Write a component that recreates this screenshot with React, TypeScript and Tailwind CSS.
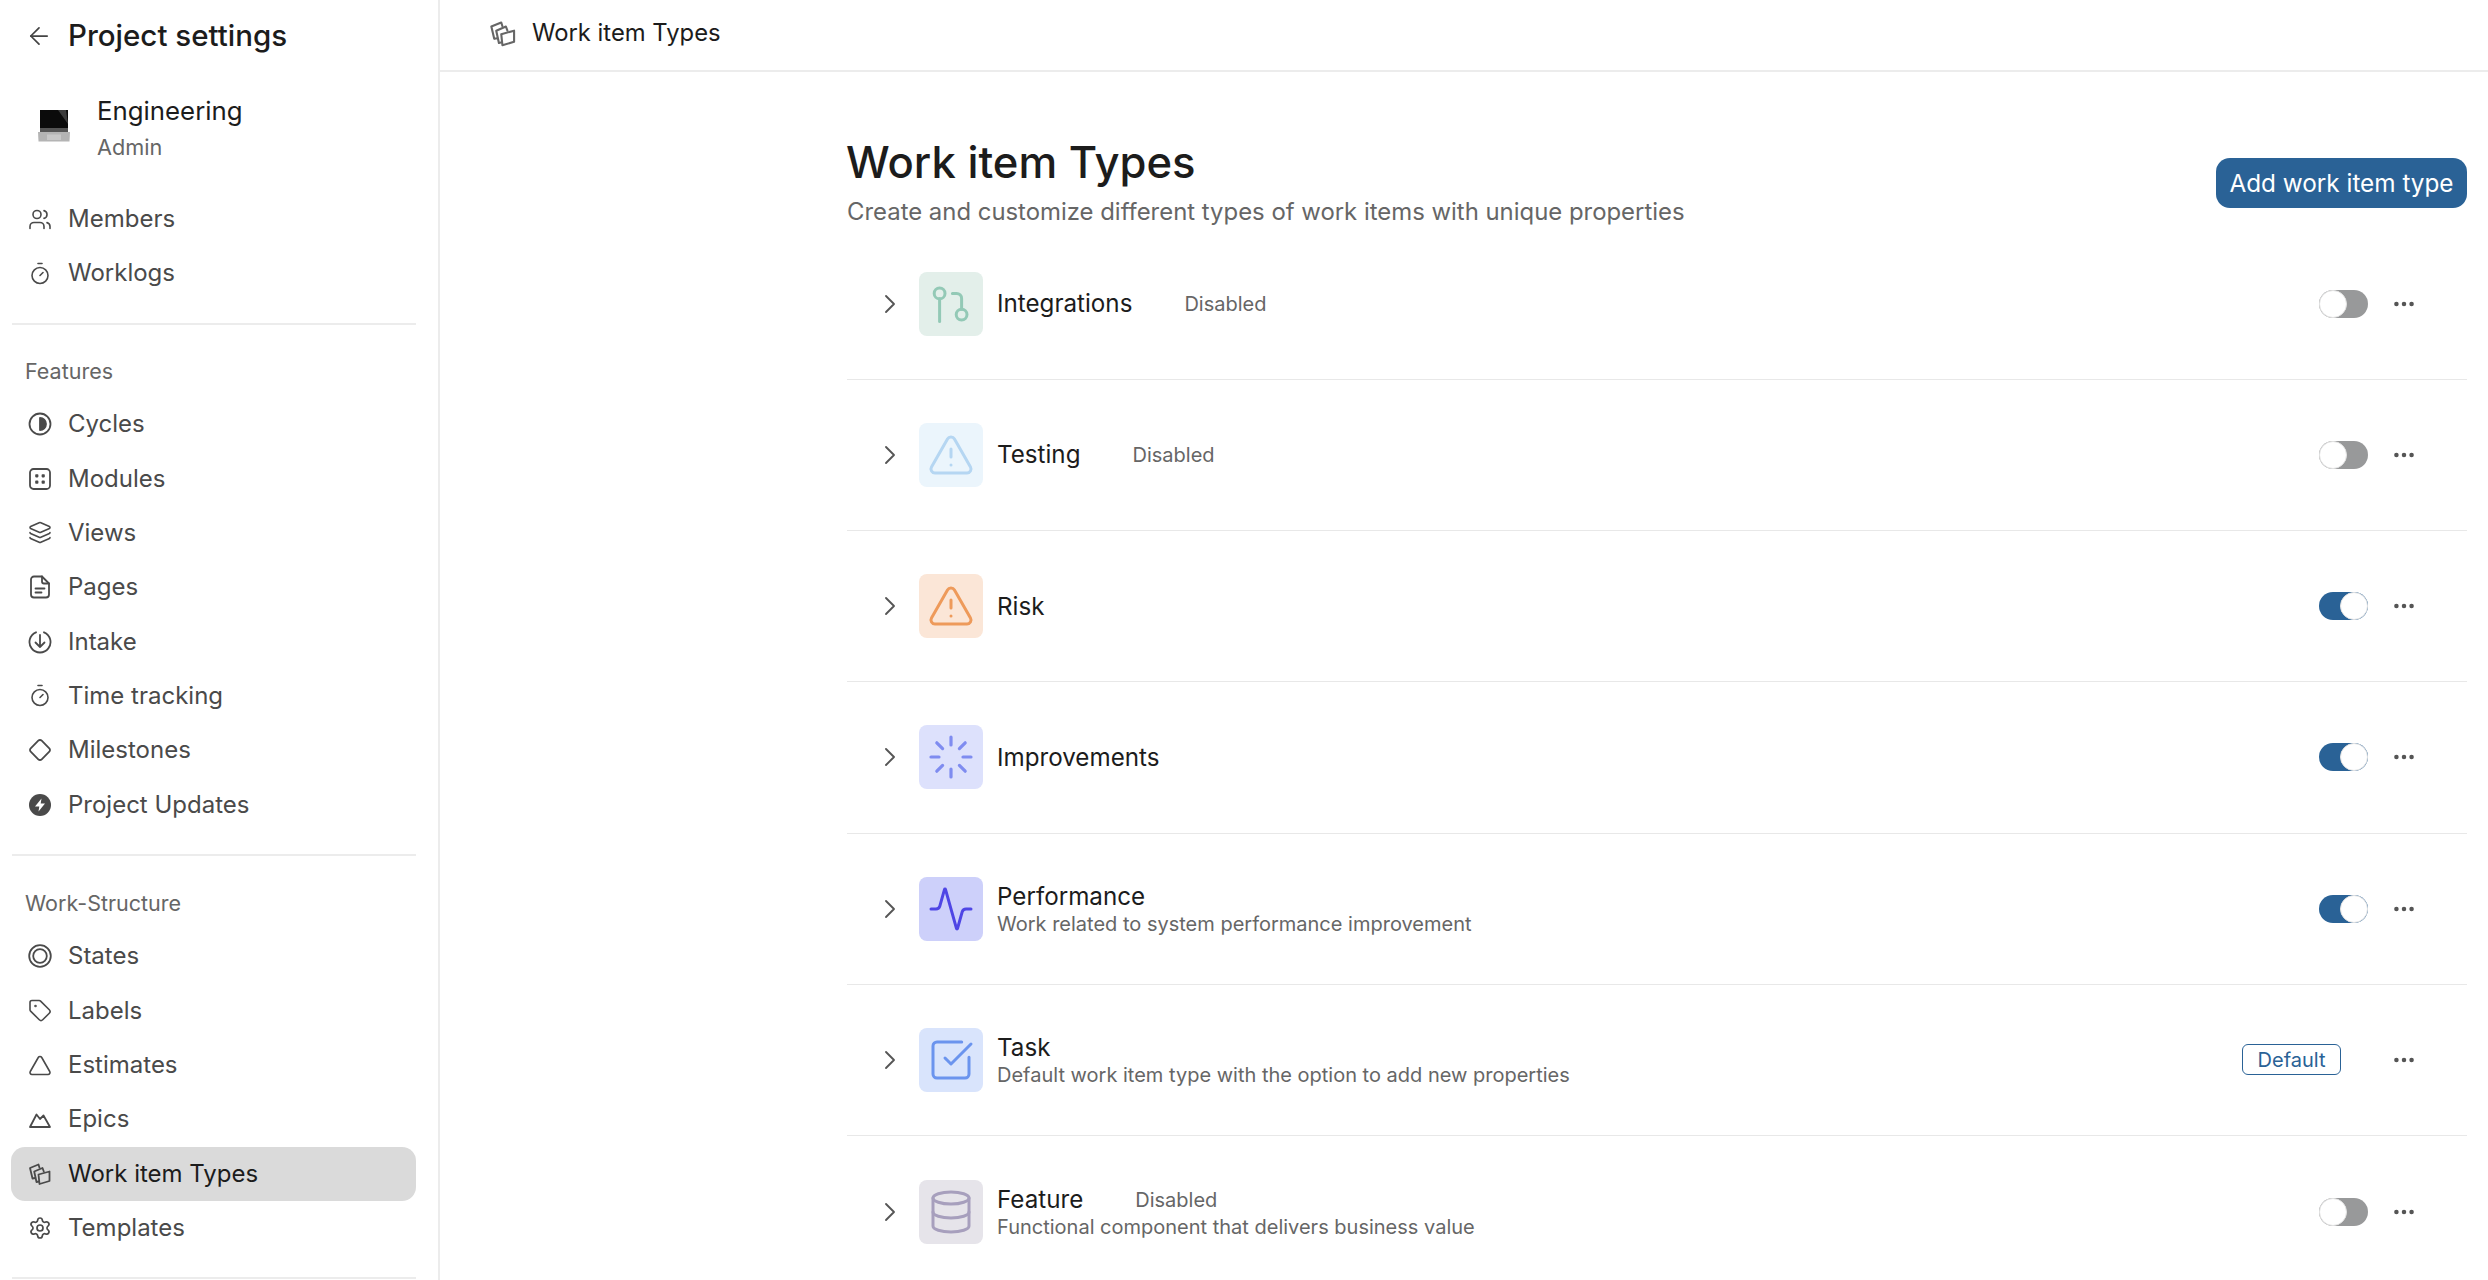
import { ReactNode } from 'react';
import {
  Activity,
  ArrowLeft,
  ChevronRight,
  Database,
  Diamond,
  Ellipsis,
  Layers,
  Loader,
  Settings,
  SquareCheckBig,
  Tag,
  Timer,
  Triangle,
  TriangleAlert,
  Users,
} from 'lucide-react';

const svgProps = {
  viewBox: '0 0 24 24',
  fill: 'none',
  stroke: 'currentColor',
  strokeWidth: 1.8,
  strokeLinecap: 'round' as const,
  strokeLinejoin: 'round' as const,
};

const CyclesIcon = () => (
  <svg {...svgProps} className="size-6">
    <circle cx="12" cy="12" r="10.5" />
    <path d="M12 6a6 6 0 0 1 0 12z" fill="currentColor" />
  </svg>
);

const ModulesIcon = () => (
  <svg {...svgProps} className="size-6">
    <rect x="2" y="2" width="20" height="20" rx="3.5" />
    <g fill="currentColor" stroke="none">
      <rect x="7.2" y="7.2" width="3.2" height="3.2" rx="0.8" />
      <rect x="13.6" y="7.2" width="3.2" height="3.2" rx="0.8" />
      <rect x="7.2" y="13.6" width="3.2" height="3.2" rx="0.8" />
      <rect x="13.6" y="13.6" width="3.2" height="3.2" rx="0.8" />
    </g>
  </svg>
);

const PagesIcon = () => (
  <svg {...svgProps} className="size-6">
    <path d="M14 1.500H6a3 3 0 0 0-3 3v15a3 3 0 0 0 3 3h12a3 3 0 0 0 3-3V8.500z" />
    <path d="M14 1.500v5a2 2 0 0 0 2 2h5" />
    <path d="M7.500 13.500h9M7.500 17.500h6" />
  </svg>
);

const IntakeIcon = () => (
  <svg {...svgProps} className="size-6">
    <path d="M8 2.300a10.500 10.500 0 1 0 8 0" />
    <path d="M12 5v12M7.500 12.500 12 17l4.500-4.500" />
  </svg>
);

const UpdatesIcon = () => (
  <svg viewBox="0 0 24 24" className="size-6">
    <circle cx="12" cy="12" r="11" fill="currentColor" />
    <path d="M13.500 5.500 7 13.500h4.300L10.500 18.500 17 10.500h-4.300z" fill="#fff" />
  </svg>
);

const StatesIcon = () => (
  <svg {...svgProps} className="size-6">
    <circle cx="12" cy="12" r="10.800" />
    <circle cx="12" cy="12" r="6.800" strokeWidth={1.8} />
  </svg>
);

const EpicsIcon = () => (
  <svg {...svgProps} className="size-[26px]">
    <path d="M2 20 8.500 7.500 12 12l3.500-3.500L22 20z" />
  </svg>
);

const TypesIcon = ({ className = 'size-[27px]' }: { className?: string }) => (
  <svg {...svgProps} className={className}>
    <path d="M7.300 16.500 4.500 17 2 6.500 10.500 3l1 3.200" />
    <path d="M11 20 8.500 20.500 6.200 10 14.500 6.500l1.300 3.500" />
    <path d="M10.500 13 21.500 10v9.500L11.500 22.500z" />
  </svg>
);

const BranchIcon = () => (
  <svg viewBox="0 0 24 24" fill="none" stroke="#93c9b6" strokeWidth={1.5} strokeLinecap="round" className="size-[48px]">
    <circle cx="6.300" cy="6.700" r="2.700" />
    <path d="M6.300 9.400v11.400" />
    <circle cx="17.300" cy="17.300" r="2.700" />
    <path d="M12.700 6.700h2.100a2.500 2.500 0 0 1 2.500 2.500v5.400" />
  </svg>
);

const LaptopIcon = () => (
  <svg viewBox="0 0 32 32" className="size-8">
    <path d="M2 0h28v18H2z" fill="#0b0b0b" />
    <path d="M20 0h8l2 14z" fill="#3c3c3c" />
    <path d="M2 18h28v4H2z" fill="#555" />
    <path d="M0 22h32l-.5 9.500H.5z" fill="#b4b4b4" />
    <path d="M9 24.500h14V30H9z" fill="#c8c8c8" />
  </svg>
);

const Toggle = ({ on }: { on: boolean }) => (
  <div className={`flex h-[28px] w-[49px] items-center rounded-full ${on ? 'justify-end bg-[#2a6296]' : 'justify-start bg-[#98999a]'}`}>
    <div className="size-[28px] rounded-full border border-[#e4e4e4] bg-white" />
  </div>
);

const navIcon = 'size-[27px]';

const topItems = [
  { label: 'Members', icon: <Users className={navIcon} strokeWidth={1.6} /> },
  { label: 'Worklogs', icon: <Timer className={navIcon} strokeWidth={1.6} /> },
];

const featureItems = [
  { label: 'Cycles', icon: <CyclesIcon /> },
  { label: 'Modules', icon: <ModulesIcon /> },
  { label: 'Views', icon: <Layers className={navIcon} strokeWidth={1.6} /> },
  { label: 'Pages', icon: <PagesIcon /> },
  { label: 'Intake', icon: <IntakeIcon /> },
  { label: 'Time tracking', icon: <Timer className={navIcon} strokeWidth={1.6} /> },
  { label: 'Milestones', icon: <Diamond className="size-[24px]" strokeWidth={1.8} /> },
  { label: 'Project Updates', icon: <UpdatesIcon /> },
];

const structureItems = [
  { label: 'States', icon: <StatesIcon /> },
  { label: 'Labels', icon: <Tag className={navIcon} strokeWidth={1.6} /> },
  { label: 'Estimates', icon: <Triangle className={navIcon} strokeWidth={1.6} /> },
  { label: 'Epics', icon: <EpicsIcon /> },
  { label: 'Work item Types', icon: <TypesIcon />, active: true },
  { label: 'Templates', icon: <Settings className="size-[24px]" strokeWidth={1.7} /> },
];

type WorkType = {
  name: string;
  description?: string;
  tile: string;
  icon: ReactNode;
  disabled?: boolean;
  isDefault?: boolean;
};

const workTypes: WorkType[] = [
  { name: 'Integrations', tile: 'bg-[#e3efea]', icon: <BranchIcon />, disabled: true },
  { name: 'Testing', tile: 'bg-[#ebf5fc]', icon: <TriangleAlert className="size-[48px] text-[#b5d6f2]" strokeWidth={1.5} />, disabled: true },
  { name: 'Risk', tile: 'bg-[#fbe6d7]', icon: <TriangleAlert className="size-[48px] text-[#ee9a5a]" strokeWidth={1.5} /> },
  { name: 'Improvements', tile: 'bg-[#dde1fc]', icon: <Loader className="size-[48px] text-[#7f8cf0]" strokeWidth={1.6} /> },
  {
    name: 'Performance',
    description: 'Work related to system performance improvement',
    tile: 'bg-[#cdd0fa]',
    icon: <Activity className="size-[48px] text-[#4f46e5]" strokeWidth={1.5} />,
  },
  {
    name: 'Task',
    description: 'Default work item type with the option to add new properties',
    tile: 'bg-[#d9e4fc]',
    icon: <SquareCheckBig className="size-[48px] text-[#6b94ee]" strokeWidth={1.5} />,
    isDefault: true,
  },
  {
    name: 'Feature',
    description: 'Functional component that delivers business value',
    tile: 'bg-[#e6e4ea]',
    icon: <Database className="size-[48px] text-[#a79fbd]" strokeWidth={1.5} />,
    disabled: true,
  },
];

const NavRow = ({ label, icon, active }: { label: string; icon: ReactNode; active?: boolean }) => (
  <div className={`flex h-[54.33px] items-center gap-[16px] rounded-[14px] pl-[17px] text-[24px] ${active ? 'bg-[#dadada] text-[#1c1c1c]' : 'text-[#4a4a4a]'}`}>
    <span className="flex w-6 shrink-0 items-center justify-center text-[#4a4a4a]">{icon}</span>
    <span>{label}</span>
  </div>
);

const SectionLabel = ({ children }: { children: string }) => (
  <div className="flex h-[52.500px] items-center pl-[14px] text-[21.500px] text-[#666]">{children}</div>
);

const Row = ({ item }: { item: WorkType }) => (
  <div className="flex h-[151.25px] items-center border-b border-[#e8e8e8] pl-[27px] last:border-b-0">
    <ChevronRight className="size-[32px] shrink-0 text-[#555]" strokeWidth={1.4} />
    <div className={`ml-[13px] flex size-[64px] shrink-0 items-center justify-center rounded-[8px] ${item.tile}`}>{item.icon}</div>
    <div className="ml-[14px] flex min-w-0 flex-1 flex-col">
      <div className="flex items-center gap-[52px]">
        <span className="text-[24.200px] leading-[31px] text-[#1c1c1c]">{item.name}</span>
        {item.disabled && <span className="text-[20px] text-[#666]">Disabled</span>}
      </div>
      {item.description && <p className="text-[20px] leading-[24px] text-[#666]">{item.description}</p>}
    </div>
    {item.isDefault ? (
      <div className="mr-[50px] flex h-[31px] w-[99px] items-center justify-center rounded-[6px] border border-[#2a6296] text-[20px] text-[#2a6296]">Default</div>
    ) : (
      <div className="mr-[23px]">
        <Toggle on={!item.disabled} />
      </div>
    )}
    <Ellipsis className="mr-[50px] size-[26px] text-[#555]" strokeWidth={2.2} />
  </div>
);

export default function App() {
  return (
    <div className="flex h-screen w-full overflow-hidden bg-white font-['Inter',sans-serif]">
      <aside className="flex w-[440px] shrink-0 flex-col border-r-2 border-[#ececec] pl-[11px] pr-[22px]">
        <div className="flex h-[72px] shrink-0 items-center gap-[15px] pb-[1px] pl-[14px] text-[29.500px] font-medium text-[#1c1c1c]">
          <ArrowLeft className="size-[28px] text-[#444]" strokeWidth={1.5} />
          <span>Project settings</span>
        </div>
        <div className="flex h-[120px] shrink-0 items-start pl-[27px] pt-[16px]">
          <div className="mt-[22px] shrink-0">
            <LaptopIcon />
          </div>
          <div className="ml-[27px] flex flex-col">
            <span className="text-[25.800px] leading-[46px] text-[#1c1c1c]">Engineering</span>
            <span className="text-[21.700px] leading-[26px] text-[#666]">Admin</span>
          </div>
        </div>
        {topItems.map((i) => (
          <NavRow key={i.label} {...i} />
        ))}
        <div className="mb-[20px] ml-px mt-[22px] border-t-2 border-[#ececec]" />
        <SectionLabel>Features</SectionLabel>
        {featureItems.map((i) => (
          <NavRow key={i.label} {...i} />
        ))}
        <div className="mb-[21px] ml-px mt-[22px] border-t-2 border-[#ececec]" />
        <SectionLabel>Work-Structure</SectionLabel>
        {structureItems.map((i) => (
          <NavRow key={i.label} {...i} />
        ))}
        <div className="ml-px mt-[22px] border-t-2 border-[#ececec]" />
      </aside>

      <main className="flex min-w-0 flex-1 flex-col">
        <div className="flex h-[72px] shrink-0 items-center gap-[15px] border-b-2 border-[#ececec] pb-[4px] pl-[49px] text-[23.800px] text-[#1c1c1c]">
          <TypesIcon className="size-[28px] text-[#666]" />
          <span>Work item Types</span>
        </div>
        <div className="pl-[407px] pr-[21px]">
          <div className="flex h-[156.500px] items-start justify-between">
            <div className="pt-[63px]">
              <h1 className="-ml-px text-[43.600px] font-medium leading-[56px] text-[#1c1c1c]">Work item Types</h1>
              <p className="mt-[3px] text-[23.900px] leading-[36px] text-[#666]">Create and customize different types of work items with unique properties</p>
            </div>
            <button className="mt-[86px] flex h-[50px] w-[251px] items-center justify-center rounded-[14px] bg-[#2a6296] text-[24.300px] text-white">
              Add work item type
            </button>
          </div>
          {workTypes.map((item) => (
            <Row key={item.name} item={item} />
          ))}
        </div>
      </main>
    </div>
  );
}
